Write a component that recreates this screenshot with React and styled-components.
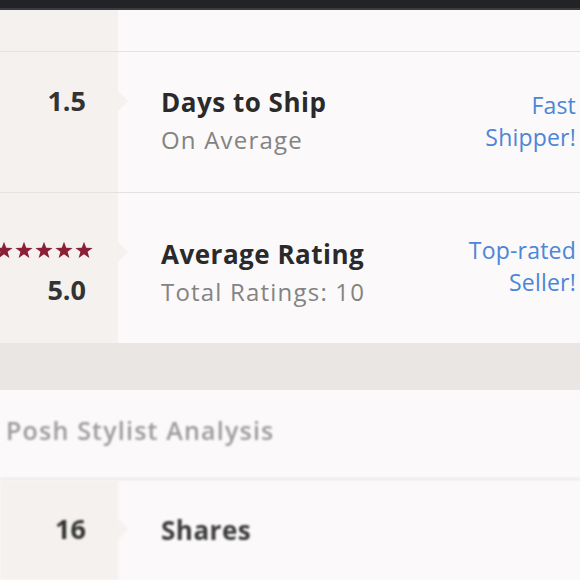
import styled, { createGlobalStyle } from 'styled-components'

const GlobalStyle = createGlobalStyle`
  *, *::before, *::after { box-sizing: border-box; }
  body {
    margin: 0;
    background: #fbf9f9;
    font-family: "Open Sans", Lato, "Liberation Sans", sans-serif;
  }
`

const Page = styled.div`
  width: 580px;
  height: 580px;
  overflow: hidden;
  background: #fbf9f9;
`

const TopBar = styled.div`
  height: 10px;
  background: #222327;
  border-bottom: 2px solid #3b3c40;
`

// one stat line: beige number column, label column, blue badge on the right
const StatRow = styled.div`
  display: grid;
  grid-template-columns: 118px 1fr auto;
  height: ${p => p.$height}px;
  border-bottom: ${p => (p.$noLine ? 'none' : '1px solid #e4e1de')};
  filter: ${p => (p.$blur ? 'blur(1px)' : 'none')};
`

const LeftCell = styled.div`
  position: relative;
  background: #f4f1ee;
  display: flex;
  flex-direction: column;
  align-items: flex-end;
  padding-right: 32px;
  padding-top: ${p => p.$top || 0}px;
  gap: 16px;

  &::after {
    content: ${p => (p.$notch ? "''" : 'none')};
    position: absolute;
    right: -10px;
    top: ${p => p.$notch || 0}px;
    transform: translateY(-50%);
    border-top: 10px solid transparent;
    border-bottom: 10px solid transparent;
    border-left: 10px solid #f4f1ee;
  }
`

const Number = styled.div`
  font-size: 27px;
  font-weight: 700;
  color: #333;
  line-height: 30px;
`

const Stars = styled.div`
  display: flex;
  gap: 2px;
  margin-right: -7px;
`

const MainCell = styled.div`
  display: flex;
  flex-direction: column;
  padding-left: 43px;
  padding-top: ${p => p.$top || 0}px;
  gap: 8px;
`

const Title = styled.div`
  font-size: 26px;
  font-weight: 700;
  color: ${p => p.$color || '#2a2a2a'};
  line-height: 30px;
  letter-spacing: 0.5px;
`

const Sub = styled.div`
  font-size: 24px;
  color: #838383;
  line-height: 30px;
  letter-spacing: 1.2px;
`

const Badge = styled.div`
  display: flex;
  flex-direction: column;
  align-items: flex-end;
  padding-right: 4px;
  padding-top: ${p => p.$top || 0}px;
  font-size: 23px;
  line-height: 32px;
  letter-spacing: 0.2px;
  color: #4c86d8;
  text-align: right;
`

const Band = styled.div`
  height: 47px;
  background: #e9e6e3;
`

const SectionHeader = styled.div`
  height: 90px;
  padding: 25px 0 0 6px;
  font-size: 25px;
  line-height: 30px;
  font-weight: 600;
  letter-spacing: 1.2px;
  color: #9b9b9b;
  border-bottom: 2px solid #ebe8e6;
  filter: blur(1px);
`

const Star = () => (
  <svg width="18" height="18" viewBox="0 0 24 24">
    <polygon
      fill="#8a1f35"
      points="12,1 15,9 23.5,9.2 16.8,14.4 19.2,22.8 12,17.8 4.8,22.8 7.2,14.4 0.5,9.2 9,9"
    />
  </svg>
)

const App = () => {
  return (
    <Page>
      <GlobalStyle />
      <TopBar />
      <StatRow $height={42}>
        <LeftCell />
        <MainCell />
      </StatRow>

      <StatRow $height={141}>
        <LeftCell $notch={49} $top={34}>
          <Number>1.5</Number>
        </LeftCell>
        <MainCell $top={35}>
          <Title>Days to Ship</Title>
          <Sub>On Average</Sub>
        </MainCell>
        <Badge $top={37}>
          <span>Fast</span>
          <span>Shipper!</span>
        </Badge>
      </StatRow>

      <StatRow $height={150} $noLine>
        <LeftCell $notch={59} $top={48}>
          <Stars>
            <Star /><Star /><Star /><Star /><Star />
          </Stars>
          <Number>5.0</Number>
        </LeftCell>
        <MainCell $top={46}>
          <Title>Average Rating</Title>
          <Sub>Total Ratings: 10</Sub>
        </MainCell>
        <Badge $top={41}>
          <span>Top-rated</span>
          <span>Seller!</span>
        </Badge>
      </StatRow>

      <Band />
      <SectionHeader>Posh Stylist Analysis</SectionHeader>

      <StatRow $height={100} $blur $noLine>
        <LeftCell $notch={49} $top={34}>
          <Number>16</Number>
        </LeftCell>
        <MainCell $top={35}>
          <Title $color="#3a3a3a">Shares</Title>
        </MainCell>
      </StatRow>
    </Page>
  )
}

export default App
